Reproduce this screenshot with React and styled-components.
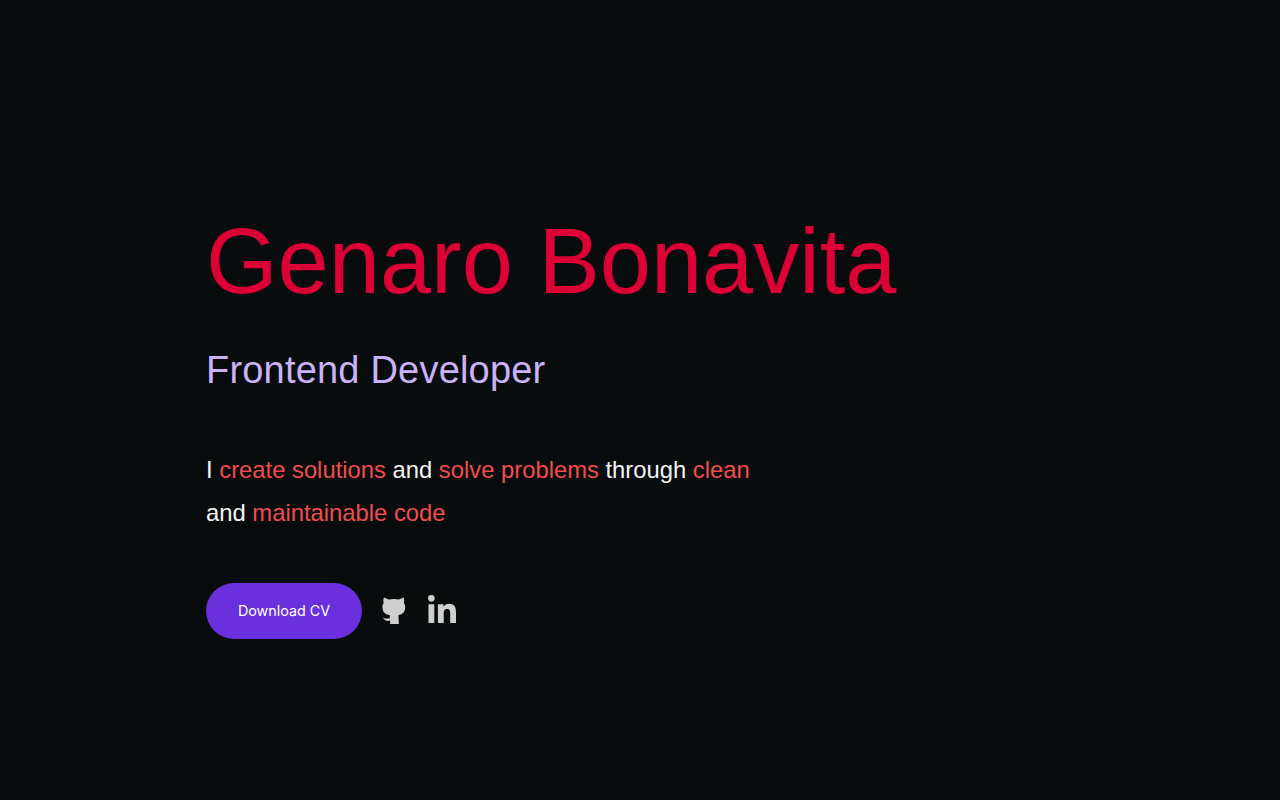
import styled, { createGlobalStyle } from "styled-components"
import { FaLinkedinIn } from "react-icons/fa"

const GlobalStyle = createGlobalStyle`
body {
    margin: 0;
    background: #080c0d;
    font-family: "Liberation Sans", Arial, sans-serif;
}
`

const GithubIcon = () => (
    <svg width="23.5" height="30" viewBox="0 0 26 30" preserveAspectRatio="none" fill="currentColor">
        <path d="M2 1.5 L7.5 3.6 C10.8 2.8 15.2 2.8 18.5 3.6 L24 1.5 C24.6 3.5 24.7 5.5 24.3 7 C25.4 8.5 25.8 10 25.6 12 C25.2 16.6 22.2 18.6 18.2 19 L18.6 28 L9 28 L9 24.6 C6 25.4 3.2 24.8 0.8 21.4 C3 22.4 4.8 22.6 8.6 22.2 L8.6 19 C4 18.6 1 16.6 0.5 12 C0.3 10 0.7 8.5 1.8 7 C1.4 5.5 1.4 3.5 2 1.5 Z" />
    </svg>
)

const App = () => {
    return (
        <Hero>
            <GlobalStyle />
            <Name>Genaro Bonavita</Name>
            <Role>Frontend Developer</Role>
            <Intro>
                I <Hl>create solutions</Hl> and <Hl>solve problems</Hl> through <Hl>clean</Hl>
                <br />
                and <Hl>maintainable code</Hl>
            </Intro>
            <Actions>
                <DownloadBtn>Download CV</DownloadBtn>
                <IconLink href="#" aria-label="GitHub"><GithubIcon /></IconLink>
                <IconLink href="#" aria-label="LinkedIn"><FaLinkedinIn size={32} /></IconLink>
            </Actions>
        </Hero>
    )
}

const Hero = styled.main`
min-height: 800px;
display: flex;
flex-direction: column;
align-items: flex-start;
padding: 206px 0 0 206px;
box-sizing: border-box;
`

const Name = styled.h1`
margin: 0;
font-size: 92px;
line-height: 110px;
font-weight: 400;
color: #db0036;
`

const Role = styled.h2`
margin: 32px 0 0;
font-size: 38px;
line-height: 44px;
font-weight: 400;
letter-spacing: 0.2px;
color: #c9b2f6;
`

const Intro = styled.p`
margin: 56px 0 0;
font-size: 23.8px;
line-height: 43px;
color: #f4f6f6;
`

const Hl = styled.span`
color: #f24d4d;
`

const Actions = styled.div`
margin-top: 49px;
display: flex;
align-items: center;
gap: 20px;
`

const DownloadBtn = styled.button`
width: 156px;
height: 56px;
padding: 0 0 1px;
border: none;
border-radius: 28px;
background: #6a30dd;
color: #fff;
font-family: "Inter", sans-serif;
font-size: 14.3px;
`

const IconLink = styled.a`
display: flex;
color: #cfcfcf;
filter: blur(0.4px);
`

export default App
